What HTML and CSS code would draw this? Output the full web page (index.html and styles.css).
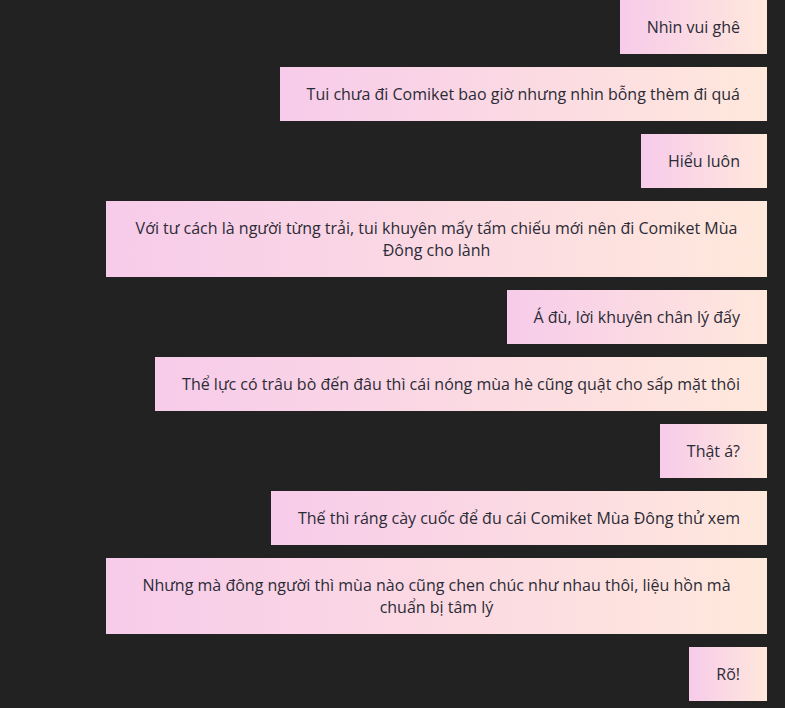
FILE: index.html
```html
<!DOCTYPE html>
<html lang="vi">
<head>
    <meta charset="UTF-8">
    <meta name="viewport" content="width=device-width, initial-scale=1.0">
    <title>Chat</title>
    <link rel="stylesheet" href="styles.css">
</head>
<body>
    <div class="chat">
        <div class="msg">Nhìn vui ghê</div>
        <div class="msg">Tui chưa đi Comiket bao giờ nhưng nhìn bỗng thèm đi quá</div>
        <div class="msg">Hiểu luôn</div>
        <div class="msg">Với tư cách là người từng trải, tui khuyên mấy tấm chiếu mới nên đi Comiket Mùa Đông cho lành</div>
        <div class="msg">Á đù, lời khuyên chân lý đấy</div>
        <div class="msg">Thể lực có trâu bò đến đâu thì cái nóng mùa hè cũng quật cho sấp mặt thôi</div>
        <div class="msg">Thật á?</div>
        <div class="msg">Thế thì ráng cày cuốc để đu cái Comiket Mùa Đông thử xem</div>
        <div class="msg">Nhưng mà đông người thì mùa nào cũng chen chúc như nhau thôi, liệu hồn mà chuẩn bị tâm lý</div>
        <div class="msg">Rõ!</div>
    </div>
</body>
</html>
```

FILE: styles.css
```css
* { margin: 0; padding: 0; box-sizing: border-box; }
html, body { height: 100%; }
body {
    background: #222222;
    font-family: 'Open Sans', 'Noto Sans', sans-serif;
    color: #2b2b36;
    overflow: hidden;
}
.chat {
    height: 701px;
    padding-right: 18px;
    display: flex;
    flex-direction: column;
    align-items: flex-end;
    justify-content: flex-end;
    gap: 13px;
    overflow: hidden;
}
.msg {
    flex-shrink: 0;
    max-width: 661px;
    padding: 16px 27px;
    font-size: 16px;
    line-height: 22px;
    text-align: center;
    background: linear-gradient(90deg, #f7cbea, #ffe8dc);
}
```
